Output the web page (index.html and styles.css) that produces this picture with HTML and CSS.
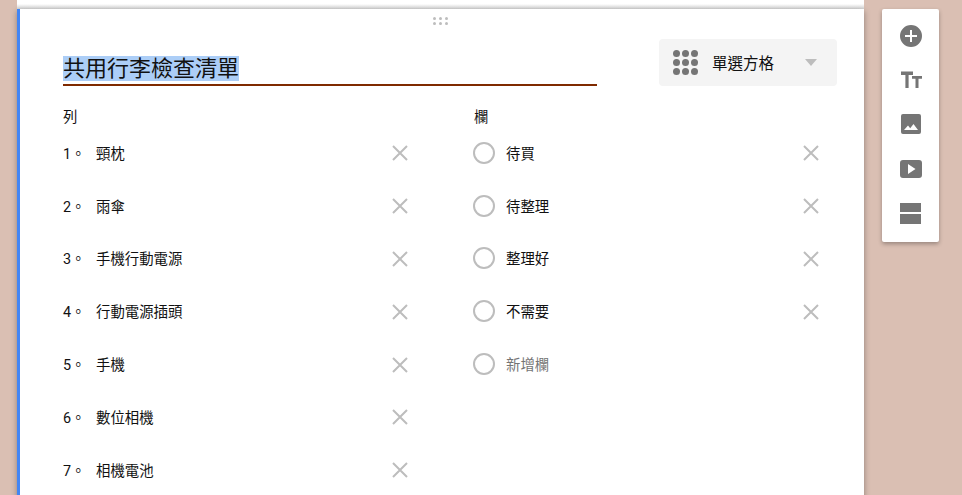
FILE: index.html
```html
<!DOCTYPE html>
<html lang="zh-TW">
<head>
    <meta charset="UTF-8">
    <meta name="viewport" content="width=device-width, initial-scale=1.0">
    <title>共用行李檢查清單</title>
    <link rel="stylesheet" href="styles.css">
</head>
<body>
    <svg class="icon-defs" width="0" height="0">
        <symbol id="icon-x" viewBox="0 0 16 16">
            <path d="M1 1L15 15M15 1L1 15" fill="none" stroke="#bdbdbd" stroke-width="2"/>
        </symbol>
    </svg>

    <div class="page">
        <div class="form-column">
            <div class="prev-card"></div>

            <div class="question-card">
                <div class="drag-handle">
                    <span></span><span></span><span></span>
                    <span></span><span></span><span></span>
                </div>

                <div class="question-header">
                    <div class="title-field"><span class="title-selected">共用行李檢查清單</span></div>
                    <div class="type-select">
                        <div class="type-dots">
                            <span></span><span></span><span></span>
                            <span></span><span></span><span></span>
                            <span></span><span></span><span></span>
                        </div>
                        <div class="type-label">單選方格</div>
                        <div class="type-arrow"></div>
                    </div>
                </div>

                <div class="grid-columns">
                    <div class="grid-list">
                        <div class="list-label">列</div>
                        <div class="option"><div class="option-mark">1。</div><div class="option-text">頸枕</div><svg class="option-remove"><use href="#icon-x"/></svg></div>
                        <div class="option"><div class="option-mark">2。</div><div class="option-text">雨傘</div><svg class="option-remove"><use href="#icon-x"/></svg></div>
                        <div class="option"><div class="option-mark">3。</div><div class="option-text">手機行動電源</div><svg class="option-remove"><use href="#icon-x"/></svg></div>
                        <div class="option"><div class="option-mark">4。</div><div class="option-text">行動電源插頭</div><svg class="option-remove"><use href="#icon-x"/></svg></div>
                        <div class="option"><div class="option-mark">5。</div><div class="option-text">手機</div><svg class="option-remove"><use href="#icon-x"/></svg></div>
                        <div class="option"><div class="option-mark">6。</div><div class="option-text">數位相機</div><svg class="option-remove"><use href="#icon-x"/></svg></div>
                        <div class="option"><div class="option-mark">7。</div><div class="option-text">相機電池</div><svg class="option-remove"><use href="#icon-x"/></svg></div>
                    </div>

                    <div class="grid-list">
                        <div class="list-label">欄</div>
                        <div class="option"><div class="option-mark radio-mark"><div class="radio"></div></div><div class="option-text">待買</div><svg class="option-remove"><use href="#icon-x"/></svg></div>
                        <div class="option"><div class="option-mark radio-mark"><div class="radio"></div></div><div class="option-text">待整理</div><svg class="option-remove"><use href="#icon-x"/></svg></div>
                        <div class="option"><div class="option-mark radio-mark"><div class="radio"></div></div><div class="option-text">整理好</div><svg class="option-remove"><use href="#icon-x"/></svg></div>
                        <div class="option"><div class="option-mark radio-mark"><div class="radio"></div></div><div class="option-text">不需要</div><svg class="option-remove"><use href="#icon-x"/></svg></div>
                        <div class="option"><div class="option-mark radio-mark"><div class="radio"></div></div><div class="option-text option-add">新增欄</div></div>
                    </div>
                </div>
            </div>
        </div>

        <div class="toolbar">
            <div class="tool">
                <svg width="22" height="22" viewBox="0 0 22 22">
                    <path fill="#757575" fill-rule="evenodd" d="M11 0a11 11 0 1 0 0 22a11 11 0 1 0 0-22zM10 5h2v5h5v2h-5v5h-2v-5H5v-2h5z"/>
                </svg>
            </div>
            <div class="tool">
                <svg width="22" height="18" viewBox="0 0 22 18">
                    <path fill="#757575" d="M1 .5h12V4H8.600v13H5.400V4H1zM12 5h10v2.800h-3.500V17h-3V7.800H12z"/>
                </svg>
            </div>
            <div class="tool">
                <svg width="20" height="20" viewBox="0 0 20 20">
                    <path fill="#757575" fill-rule="evenodd" d="M2 0h16a2 2 0 0 1 2 2v16a2 2 0 0 1-2 2H2a2 2 0 0 1-2-2V2a2 2 0 0 1 2-2zM3 16h14l-4.500-6l-3.300 4.200l-2.200-2.700z"/>
                </svg>
            </div>
            <div class="tool">
                <svg width="22" height="18" viewBox="0 0 22 18">
                    <path fill="#757575" fill-rule="evenodd" d="M3 0h16a3 3 0 0 1 3 3v12a3 3 0 0 1-3 3H3a3 3 0 0 1-3-3V3a3 3 0 0 1 3-3zM8 4v10l7.500-5z"/>
                </svg>
            </div>
            <div class="tool">
                <svg width="21" height="22" viewBox="0 0 21 22">
                    <path fill="#757575" d="M0 1h21v9H0zM0 12h21v10H0z"/>
                </svg>
            </div>
        </div>
    </div>
</body>
</html>
```

FILE: styles.css
```css
html, body {
    margin: 0;
    height: 100%;
    overflow: hidden;
}
body {
    background-color: #dabfb3;
    font-family: Roboto, "Noto Sans CJK TC", sans-serif;
    color: #111;
}
.icon-defs {
    display: block;
    height: 0;
}
.page {
    display: flex;
    align-items: flex-start;
    gap: 18px;
    padding-left: 17px;
}
.form-column {
    width: 847px;
    flex-shrink: 0;
}
.prev-card {
    height: 9px;
    background: linear-gradient(#fff 4px, #d4d4d4);
}
.question-card {
    height: 600px;
    padding: 8px 27px 0 43px;
    background-color: #fff;
    border-left: 3px solid #4285f4;
    box-shadow: 0 2px 6px rgba(0,0,0,0.35);
}
.drag-handle {
    display: grid;
    grid-template-columns: repeat(3, 3px);
    gap: 2px 3px;
    width: 15px;
    height: 8px;
    margin-left: 370px;
}
.drag-handle span {
    width: 3px;
    height: 3px;
    border-radius: 50%;
    background-color: #bdbdbd;
}
.question-header {
    display: flex;
    align-items: flex-end;
    gap: 62px;
    margin-top: 14px;
}
.title-field {
    width: 534px;
    padding-bottom: 3px;
    border-bottom: 2px solid #7f2a00;
    font-size: 22px;
    line-height: 25px;
}
.title-selected {
    display: inline-block;
    background-color: #accef7;
}
.type-select {
    display: flex;
    align-items: center;
    width: 178px;
    height: 47px;
    padding-left: 14px;
    box-sizing: border-box;
    background-color: #f4f4f4;
    border-radius: 4px;
}
.type-dots {
    display: grid;
    grid-template-columns: repeat(3, 7px);
    gap: 2px;
}
.type-dots span {
    width: 7px;
    height: 7px;
    border-radius: 50%;
    background-color: #757575;
}
.type-label {
    margin-left: 14px;
    padding-bottom: 2px;
    width: 93px;
    font-size: 15.5px;
}
.type-arrow {
    width: 0;
    height: 0;
    margin-top: -1px;
    border-left: 6.5px solid transparent;
    border-right: 6.5px solid transparent;
    border-top: 7px solid #bdbdbd;
}
.grid-columns {
    display: grid;
    grid-template-columns: 345px 345px;
    gap: 66px;
    margin-top: 21px;
}
.list-label {
    height: 19px;
    padding-top: 1px;
    font-size: 14.4px;
    line-height: 20px;
}
.option {
    display: flex;
    align-items: center;
    height: 52.8px;
    font-size: 14.4px;
}
.option-mark {
    width: 33px;
    flex-shrink: 0;
    padding-bottom: 2px;
}
.radio-mark {
    width: 32px;
    margin-left: -1px;
    margin-right: 1px;
    padding-bottom: 1px;
}
.option-text {
    flex: 1;
    padding-bottom: 2px;
}
.option-add {
    color: #757575;
}
.option-remove {
    width: 16px;
    height: 16px;
    flex-shrink: 0;
}
.radio {
    width: 18px;
    height: 18px;
    border: 2px solid #bdbdbd;
    border-radius: 50%;
}
.toolbar {
    width: 57px;
    margin-top: 9px;
    padding: 4.750px 0 7.250px;
    background-color: #fff;
    border-radius: 2px;
    box-shadow: 0 2px 4px rgba(0,0,0,0.3);
}
.tool {
    display: flex;
    align-items: center;
    justify-content: center;
    height: 44.250px;
}
```
